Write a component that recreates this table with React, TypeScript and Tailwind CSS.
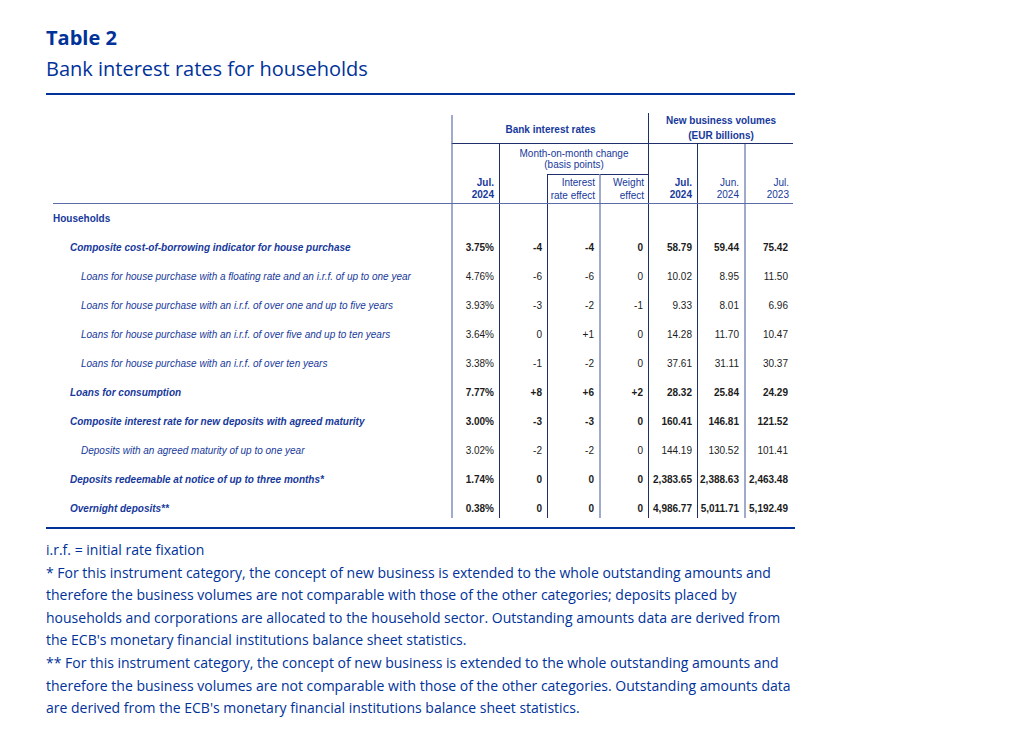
type Row = {
    label: string
    level: 0 | 1 | 2
    bold: boolean
    vals: string[] | null
}

const rows: Row[] = [
    { label: "Households", level: 0, bold: true, vals: null },
    { label: "Composite cost-of-borrowing indicator for house purchase", level: 1, bold: true, vals: ["3.75%", "-4", "-4", "0", "58.79", "59.44", "75.42"] },
    { label: "Loans for house purchase with a floating rate and an i.r.f. of up to one year", level: 2, bold: false, vals: ["4.76%", "-6", "-6", "0", "10.02", "8.95", "11.50"] },
    { label: "Loans for house purchase with an i.r.f. of over one and up to five years", level: 2, bold: false, vals: ["3.93%", "-3", "-2", "-1", "9.33", "8.01", "6.96"] },
    { label: "Loans for house purchase with an i.r.f. of over five and up to ten years", level: 2, bold: false, vals: ["3.64%", "0", "+1", "0", "14.28", "11.70", "10.47"] },
    { label: "Loans for house purchase with an i.r.f. of over ten years", level: 2, bold: false, vals: ["3.38%", "-1", "-2", "0", "37.61", "31.11", "30.37"] },
    { label: "Loans for consumption", level: 1, bold: true, vals: ["7.77%", "+8", "+6", "+2", "28.32", "25.84", "24.29"] },
    { label: "Composite interest rate for new deposits with agreed maturity", level: 1, bold: true, vals: ["3.00%", "-3", "-3", "0", "160.41", "146.81", "121.52"] },
    { label: "Deposits with an agreed maturity of up to one year", level: 2, bold: false, vals: ["3.02%", "-2", "-2", "0", "144.19", "130.52", "101.41"] },
    { label: "Deposits redeemable at notice of up to three months*", level: 1, bold: true, vals: ["1.74%", "0", "0", "0", "2,383.65", "2,388.63", "2,463.48"] },
    { label: "Overnight deposits**", level: 1, bold: true, vals: ["0.38%", "0", "0", "0", "4,986.77", "5,011.71", "5,192.49"] },
]

// vertical rules, left to right: light ones are the 2px grey-blue lines
const colBorders = [
    "border-l-2 border-[#a0aacd]",
    "border-l border-[#1f2f6b]",
    "border-l border-[#1f2f6b]",
    "border-l-2 border-[#a0aacd]",
    "border-l border-[#1f2f6b]",
    "border-l border-[#1f2f6b]",
    "border-l-2 border-[#a0aacd]",
]

const labelPad = ["pl-0", "pl-[17px]", "pl-[28px]"]

const notes = [
    "i.r.f. = initial rate fixation",
    "* For this instrument category, the concept of new business is extended to the whole outstanding amounts and",
    "therefore the business volumes are not comparable with those of the other categories; deposits placed by",
    "households and corporations are allocated to the household sector. Outstanding amounts data are derived from",
    "the ECB's monetary financial institutions balance sheet statistics.",
    "** For this instrument category, the concept of new business is extended to the whole outstanding amounts and",
    "therefore the business volumes are not comparable with those of the other categories. Outstanding amounts data",
    "are derived from the ECB's monetary financial institutions balance sheet statistics.",
]

const cols = "grid-cols-[398px_48px_48px_52px_49px_49px_47px_49px]"

function TableHead() {
    return (
        <div className={`grid ${cols} grid-rows-[29px_30px_29px] text-[10px] text-[#17399b]`}>
            <div className="col-start-2 col-span-4 row-start-1 border-l-2 border-b border-[#a0aacd] border-b-[#1f2f6b] flex items-center justify-center font-bold">
                Bank interest rates
            </div>
            <div className="col-start-6 col-span-3 row-start-1 border-l border-b border-[#1f2f6b] flex flex-col items-center -mt-[2px] font-bold leading-[15px]">
                <span>New business volumes</span>
                <span>(EUR billions)</span>
            </div>

            <div className="col-start-2 row-start-2 row-span-2 border-l-2 border-[#a0aacd] flex flex-col items-end justify-end pr-[5px] pb-[2px] leading-[12px] font-bold">
                <span>Jul.</span>
                <span>2024</span>
            </div>
            <div className="col-start-3 col-span-3 row-start-2 border-l border-[#1f2f6b] flex flex-col items-center pt-[4px] leading-[11px]">
                <span>Month-on-month change</span>
                <span>(basis points)</span>
            </div>
            <div className="col-start-3 row-start-3 border-l border-[#1f2f6b]" />
            <div className="col-start-4 row-start-3 border-l border-t border-[#1f2f6b] flex flex-col items-end pr-[4px] pt-[1px] leading-[13px]">
                <span>Interest</span>
                <span>rate effect</span>
            </div>
            <div className="col-start-5 row-start-3 border-l-2 border-t border-[#a0aacd] border-t-[#1f2f6b] flex flex-col items-end pr-[4px] pt-[1px] leading-[13px]">
                <span>Weight</span>
                <span>effect</span>
            </div>

            <div className="col-start-6 row-start-2 row-span-2 border-l border-[#1f2f6b] flex flex-col items-end justify-end pr-[5px] pb-[2px] leading-[12px] font-bold">
                <span>Jul.</span>
                <span>2024</span>
            </div>
            <div className="col-start-7 row-start-2 row-span-2 border-l border-[#1f2f6b] flex flex-col items-end justify-end pr-[5px] pb-[2px] leading-[12px]">
                <span>Jun.</span>
                <span>2024</span>
            </div>
            <div className="col-start-8 row-start-2 row-span-2 border-l-2 border-[#a0aacd] flex flex-col items-end justify-end pr-[4px] pb-[2px] leading-[12px]">
                <span>Jul.</span>
                <span>2023</span>
            </div>
        </div>
    )
}

function TableBody() {
    return (
        <div className={`grid ${cols} grid-rows-[repeat(10,29px)_24px] border-t border-[#5c6ca6] text-[10px]`}>
            {rows.map((r) => (
                <div key={r.label} className="contents">
                    <div
                        className={`${labelPad[r.level]} leading-[29px] whitespace-nowrap text-[#17399b] ${r.bold ? "font-bold" : ""} ${r.level > 0 ? "italic" : ""}`}
                    >
                        {r.label}
                    </div>
                    {colBorders.map((b, i) => (
                        <div
                            key={i}
                            className={`${b} text-right pr-[5px] leading-[29px] whitespace-nowrap text-[#1c1c1c] ${r.bold ? "font-bold" : ""}`}
                        >
                            {r.vals ? r.vals[i] : ""}
                        </div>
                    ))}
                </div>
            ))}
        </div>
    )
}

export default function App() {
    return (
        <div className="w-[1015px] min-h-[740px] bg-white font-['Open_Sans',sans-serif] text-[#003299]">
            <div className="w-[749px] ml-[46px] pt-[23px]">
                <h1 className="text-[20px] font-bold leading-[30px]">Table 2</h1>
                <h2 className="text-[20px] leading-[30px] mt-[1px]">Bank interest rates for households</h2>
                <div className="h-[2px] bg-[#003299] mt-[9px]" />

                <div className="pl-[7px] pr-[2px] pt-[20px] font-['Liberation_Sans',Arial,sans-serif]">
                    <TableHead />
                    <TableBody />
                </div>

                <div className="h-[2px] bg-[#003299] mt-[9px]" />

                <div className="mt-[10px] text-[14px] leading-[22.6px]">
                    {notes.map((n) => (
                        <p key={n} className="whitespace-nowrap">{n}</p>
                    ))}
                </div>
            </div>
        </div>
    )
}
